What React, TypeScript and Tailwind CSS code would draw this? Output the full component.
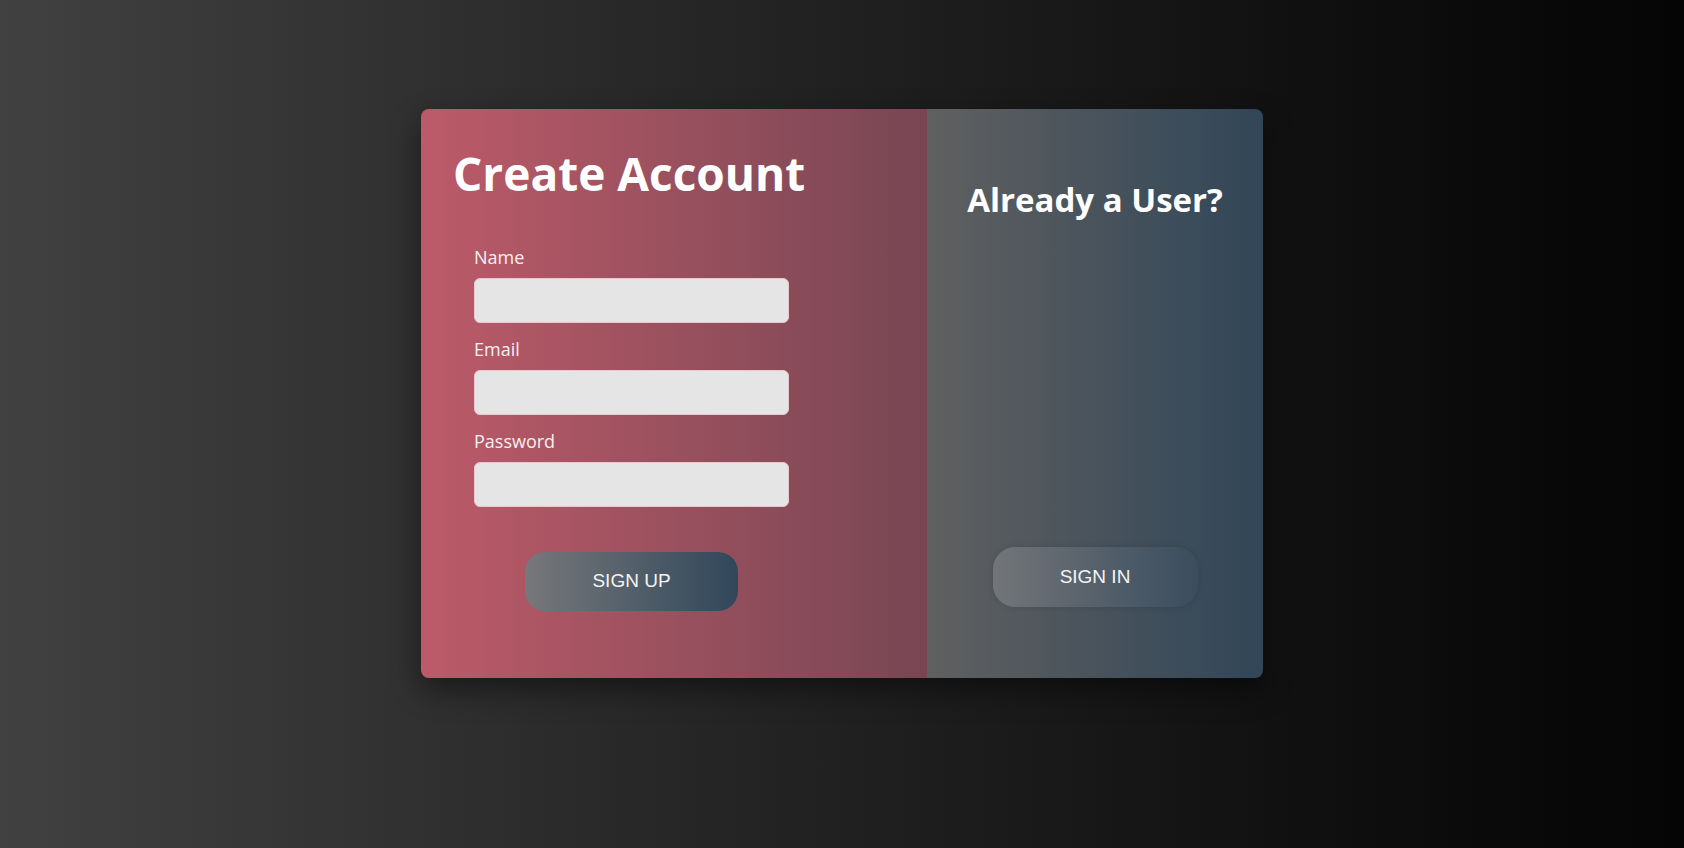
import React from "react";

export default function App() {
  const labelCls =
    "block text-[18px] leading-6 font-medium text-[#f5f0f1] [font-family:'Open_Sans',sans-serif]";
  const inputCls =
    "mt-[9px] block w-[315px] h-[45px] rounded-[6px] bg-[#e5e5e5] border border-[#e9c9cf] outline-none";
  return (
    <div className="w-full h-[848px] bg-gradient-to-r from-[#414141] to-[#050505] flex justify-center pt-[109px] overflow-hidden">
      <div className="flex w-[842px] h-[569px] rounded-[8px] overflow-hidden shadow-[0_12px_30px_rgba(0,0,0,0.45)]">
        {/* Left pane */}
        <div className="w-[506px] h-full bg-gradient-to-r from-[#bd5a69] to-[#784653] pl-[32px] pt-[36px]">
          <h1 className="text-[46px] leading-[56px] font-bold text-white [font-family:'Open_Sans',sans-serif]">
            Create Account
          </h1>
          <form className="ml-[21px] mt-[44px] w-[315px] flex flex-col" onSubmit={(e) => e.preventDefault()}>
            <label className={labelCls}>Name</label>
            <input className={inputCls} type="text" />
            <label className={labelCls + " mt-[14px]"}>Email</label>
            <input className={inputCls} type="email" />
            <label className={labelCls + " mt-[14px]"}>Password</label>
            <input className={inputCls} type="password" />
            <div className="flex justify-center mt-[45px]">
              <button
                type="submit"
                className="w-[213px] h-[59px] rounded-[20px] bg-gradient-to-r from-[#77787a] to-[#31475a] text-[19px] text-[#f4f4f4] [font-family:'Liberation_Sans',Arial,sans-serif]"
              >
                SIGN UP
              </button>
            </div>
          </form>
        </div>
        {/* Right pane */}
        <div className="w-[336px] h-full bg-gradient-to-r from-[#606060] to-[#314658] flex flex-col items-center justify-between py-[71px]">
          <h2 className="text-[33px] leading-[40px] font-bold text-white [font-family:'Open_Sans',sans-serif]">
            Already a User?
          </h2>
          <button
            type="button"
            className="w-[205px] h-[60px] rounded-[22px] bg-gradient-to-r from-[#737578] to-[#3a4d5e] text-[19px] text-[#f4f4f4] shadow-[0_0_6px_rgba(0,0,0,0.12)] [font-family:'Liberation_Sans',Arial,sans-serif]"
          >
            SIGN IN
          </button>
        </div>
      </div>
    </div>
  );
}
